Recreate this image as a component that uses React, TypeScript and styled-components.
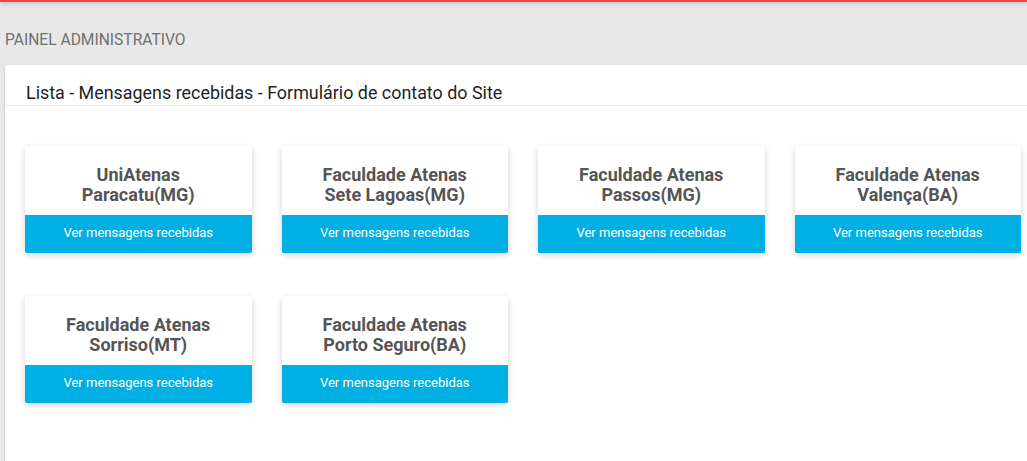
import React from "react";
import styled, { createGlobalStyle } from "styled-components";

const Global = createGlobalStyle`
  html, body { margin: 0; padding: 0; }
  body {
    background: #e8e8e8;
    font-family: Roboto, "Liberation Sans", Arial, sans-serif;
    overflow: hidden;
    width: 1027px;
    height: 461px;
  }
`;

const TopBar = styled.div`
  height: 2px;
  background: #f44336;
  box-shadow: 0 1px 4px rgba(0, 0, 0, 0.3);
  position: relative;
  z-index: 2;
`;

const PageHeader = styled.h1`
  margin: 0;
  padding: 28px 0 15px 5px;
  font-size: 15.6px;
  line-height: 20px;
  font-weight: 400;
  color: #707070;
  text-transform: uppercase;
`;

const Panel = styled.section`
  margin-left: 5px;
  width: 1036px;
  min-height: 420px;
  background: #fff;
  border-radius: 2px;
  box-shadow: 0 1px 3px rgba(0, 0, 0, 0.18);
`;

const PanelHeader = styled.div`
  padding: 16px 20px 0 21px;
  border-bottom: 1px solid #ececec;
`;

const PanelTitle = styled.h2`
  margin: 0;
  font-size: 17.9px;
  line-height: 24px;
  font-weight: 400;
  color: #1f1f1f;
`;

const PanelBody = styled.div`
  padding: 40px 20px 20px 20px;
`;

const Grid = styled.div`
  display: grid;
  grid-template-columns: repeat(4, 226.5px);
  column-gap: 30px;
  row-gap: 43px;
`;

const Card = styled.div`
  background: #fff;
  border-radius: 2px;
  box-shadow: 0 2px 6px rgba(0, 0, 0, 0.18);
  display: flex;
  flex-direction: column;
  overflow: hidden;
`;

const CardTitle = styled.div`
  padding: 19px 10px 10px;
  text-align: center;
  font-size: 18px;
  line-height: 20px;
  font-weight: 700;
  color: #555555;
`;

const CardButton = styled.button`
  height: 38px;
  border: none;
  margin: 0;
  padding: 0 0 4px;
  width: 100%;
  background: #00b0e4;
  color: #ffffff;
  font-family: Roboto, "Liberation Sans", Arial, sans-serif;
  font-size: 13px;
  font-weight: 400;
  cursor: pointer;
  box-shadow: 0 2px 4px rgba(0, 0, 0, 0.15);
`;

const units: [string, string][] = [
  ["UniAtenas", "Paracatu(MG)"],
  ["Faculdade Atenas", "Sete Lagoas(MG)"],
  ["Faculdade Atenas", "Passos(MG)"],
  ["Faculdade Atenas", "Valença(BA)"],
  ["Faculdade Atenas", "Sorriso(MT)"],
  ["Faculdade Atenas", "Porto Seguro(BA)"],
];

export default function App() {
  return (
    <>
      <Global />
      <TopBar />
      <PageHeader>Painel Administrativo</PageHeader>
      <Panel>
        <PanelHeader>
          <PanelTitle>Lista - Mensagens recebidas - Formulário de contato do Site</PanelTitle>
        </PanelHeader>
        <PanelBody>
          <Grid>
            {units.map(([a, b], i) => (
              <Card key={i}>
                <CardTitle>
                  {a}
                  <br />
                  {b}
                </CardTitle>
                <CardButton>Ver mensagens recebidas</CardButton>
              </Card>
            ))}
          </Grid>
        </PanelBody>
      </Panel>
    </>
  );
}
